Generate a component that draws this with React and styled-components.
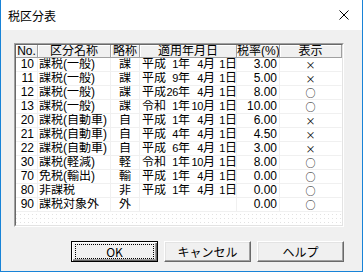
import styled, { createGlobalStyle, css } from 'styled-components'

const GlobalStyle = createGlobalStyle`
  html, body {
    margin: 0;
    padding: 0;
    background: #ffffff;
  }
  body {
    width: 363px;
    height: 272px;
    overflow: hidden;
    font-family: "Liberation Sans", "Noto Sans CJK JP", sans-serif;
  }
`

const Window = styled.div`
  box-sizing: border-box;
  width: 363px;
  height: 272px;
  display: flex;
  flex-direction: column;
  border: 1px solid #1883d7;
  border-top: none;
  background: #f0f0f0;
`

const TitleBar = styled.div`
  height: 30px;
  flex: none;
  display: flex;
  align-items: center;
  justify-content: space-between;
  padding: 0 13px 0 7px;
  background: #ffffff;
  font: 12px "Noto Sans CJK JP", sans-serif;
  color: #000;
`

const Body = styled.div`
  flex: 1;
  display: flex;
  flex-direction: column;
  padding: 13px 18px 9px 13px;
`

const ListFrame = styled.div`
  height: 184px;
  box-sizing: border-box;
  border: 1px solid;
  border-color: #a0a0a0 #ffffff #ffffff #a0a0a0;
`

const ListInner = styled.div`
  height: 100%;
  box-sizing: border-box;
  border: 1px solid;
  border-color: #696969 #e3e3e3 #e3e3e3 #696969;
  display: flex;
  flex-direction: column;
  background: #ffffff;
`

const cols = '22px 73px 29px 97px 43px 62px'

const HeaderRow = styled.div`
  display: grid;
  grid-template-columns: ${cols};
  height: 13px;
  flex: none;
`

const HeadCell = styled.div`
  box-sizing: border-box;
  height: 13px;
  background: #f0f0f0;
  border-right: 1px solid #a0a0a0;
  border-bottom: 1px solid #a0a0a0;
  box-shadow: inset 1px 1px #ffffff;
  font: 12px/12px "Liberation Sans", "Noto Sans CJK JP", sans-serif;
  text-align: center;
  color: #000;
  white-space: nowrap;
  overflow: hidden;
`

const Row = styled.div`
  display: grid;
  grid-template-columns: ${cols};
  height: 14px;
  flex: none;
`

const Cell = styled.div`
  box-sizing: border-box;
  height: 14px;
  border-right: 1px solid ${p => (p.$last ? 'transparent' : '#f0f0f0')};
  border-bottom: 1px solid #f0f0f0;
  font: 12px/13px "Liberation Sans", "Noto Sans CJK JP", sans-serif;
  color: #000;
  white-space: nowrap;
  overflow: hidden;
  text-align: ${p => p.$align || 'left'};
  padding: ${p => p.$pad || '0'};
`

const MarkCell = styled(Cell)`
  font: 10px/13px "Noto Sans CJK JP", sans-serif;
  text-align: center;
`

const Num = styled.span`
  font-family: "Liberation Sans Narrow", "Liberation Sans", sans-serif;
  ${p =>
    p.$w &&
    css`
      display: inline-block;
      width: ${p.$w}px;
      text-align: right;
      font-size: 11px;
      letter-spacing: -0.4px;
    `}
`

const Empty = styled.div`
  flex: 1;
  background-color: #ffffff;
  background-image: linear-gradient(90deg, #ffffff 3px, transparent 3px),
    linear-gradient(#e2e2e2 1px, #ffffff 1px);
  background-size: 4px 4px;
  background-position: 1px 2px;
`

const ButtonBar = styled.div`
  display: flex;
  justify-content: flex-end;
  gap: 6px;
  margin-top: 14px;
`

const Button = styled.button`
  width: 87px;
  height: 21px;
  padding: 0;
  box-sizing: border-box;
  background: #f0f0f0;
  border: 1px solid;
  border-color: #ffffff #696969 #696969 #ffffff;
  box-shadow: inset -1px -1px #a0a0a0, inset 1px 1px #e3e3e3;
  font: 12px "Noto Sans CJK JP", sans-serif;
  color: #000;
  ${p =>
    p.$default &&
    css`
      border: 1px solid #000;
      box-shadow: inset 1px 1px #ffffff, inset -1px -1px #696969,
        inset -2px -2px #a0a0a0;
    `}
`

const Face = styled.span`
  box-sizing: border-box;
  display: flex;
  align-items: center;
  justify-content: center;
  height: 15px;
  margin: 2px 3px;
  border: 1px dotted ${p => (p.$focus ? '#000' : 'transparent')};
  line-height: 13px;
`

const rows = [
  ['10', '課税(一般)', '課', ['平成', 1, 4, 1], '3.00', '×'],
  ['11', '課税(一般)', '課', ['平成', 9, 4, 1], '5.00', '×'],
  ['12', '課税(一般)', '課', ['平成', 26, 4, 1], '8.00', '○'],
  ['13', '課税(一般)', '課', ['令和', 1, 10, 1], '10.00', '○'],
  ['20', '課税(自動車)', '自', ['平成', 1, 4, 1], '6.00', '×'],
  ['21', '課税(自動車)', '自', ['平成', 4, 4, 1], '4.50', '×'],
  ['22', '課税(自動車)', '自', ['平成', 6, 4, 1], '3.00', '×'],
  ['30', '課税(軽減)', '軽', ['令和', 1, 10, 1], '8.00', '○'],
  ['70', '免税(輸出)', '輸', ['平成', 1, 4, 1], '0.00', '○'],
  ['80', '非課税', '非', ['平成', 1, 4, 1], '0.00', '○'],
  ['90', '課税対象外', '外', null, '0.00', '○'],
]

const DateText = ({ d }) => {
  if (!d) return null
  const [era, y, m, day] = d
  return (
    <>
      {era}
      <Num $w={12}>{y}</Num>年<Num $w={13}>{m}</Num>月<Num $w={10}>{day}</Num>日
    </>
  )
}

const CloseIcon = () => (
  <svg width="10" height="10" viewBox="0 0 10 10">
    <path d="M0.5 0.5 L9.5 9.5 M9.5 0.5 L0.5 9.5" stroke="#000" strokeWidth="1" />
  </svg>
)

export default function App() {
  return (
    <>
      <GlobalStyle />
      <Window>
        <TitleBar>
          <span>税区分表</span>
          <CloseIcon />
        </TitleBar>
        <Body>
          <ListFrame>
            <ListInner>
              <HeaderRow>
                <HeadCell>No.</HeadCell>
                <HeadCell>区分名称</HeadCell>
                <HeadCell>略称</HeadCell>
                <HeadCell>適用年月日</HeadCell>
                <HeadCell>税率(%)</HeadCell>
                <HeadCell>表示</HeadCell>
              </HeaderRow>
              {rows.map(r => (
                <Row key={r[0]}>
                  <Cell $align="right" $pad="0 3px 0 0">
                    <Num>{r[0]}</Num>
                  </Cell>
                  <Cell $pad="0 0 0 1px">{r[1]}</Cell>
                  <Cell $align="center">{r[2]}</Cell>
                  <Cell $pad="0 0 0 2px">
                    <DateText d={r[3]} />
                  </Cell>
                  <Cell $align="right" $pad="0 2px 0 0">
                    <Num>{r[4]}</Num>
                  </Cell>
                  <MarkCell $last>{r[5]}</MarkCell>
                </Row>
              ))}
              <Empty />
            </ListInner>
          </ListFrame>
          <ButtonBar>
            <Button $default>
              <Face $focus>OK</Face>
            </Button>
            <Button>
              <Face>キャンセル</Face>
            </Button>
            <Button>
              <Face>ヘルプ</Face>
            </Button>
          </ButtonBar>
        </Body>
      </Window>
    </>
  )
}
